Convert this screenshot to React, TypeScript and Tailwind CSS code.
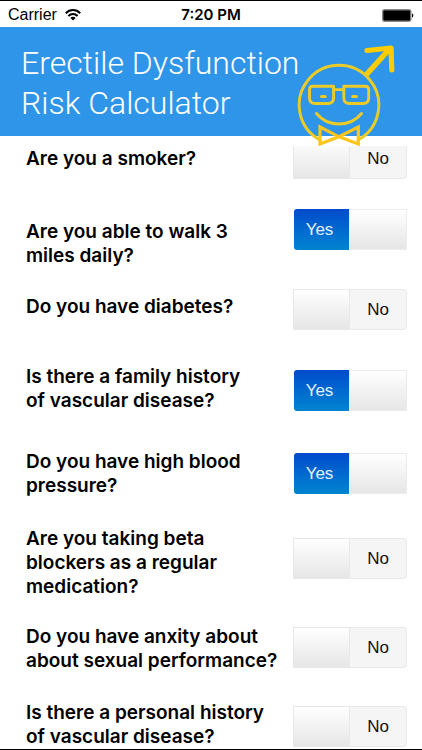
import { useState } from "react";

type Question = {
  id: string;
  text: string;
  yes: boolean;
  row: string;
  labelPad: string;
  switchPad: string;
};

const questions: Question[] = [
  { id: "smoker", text: "Are you a smoker?", yes: false, row: "h-[71px]", labelPad: "pt-2", switchPad: "pt-0" },
  { id: "walk", text: "Are you able to walk 3\nmiles daily?", yes: true, row: "h-20", labelPad: "pt-[10px]", switchPad: "pt-0" },
  { id: "diabetes", text: "Do you have diabetes?", yes: false, row: "h-[75px]", labelPad: "pt-[5px]", switchPad: "pt-0" },
  { id: "family", text: "Is there a family history\nof vascular disease?", yes: true, row: "h-[85px]", labelPad: "pt-0", switchPad: "pt-[6px]" },
  { id: "pressure", text: "Do you have high blood\npressure?", yes: true, row: "h-[77px]", labelPad: "pt-0", switchPad: "pt-1" },
  { id: "beta", text: "Are you taking beta\nblockers as a regular\nmedication?", yes: false, row: "h-[98px]", labelPad: "pt-0", switchPad: "pt-3" },
  { id: "anxiety", text: "Do you have anxity about\nabout sexual performance?", yes: false, row: "h-[76px]", labelPad: "pt-0", switchPad: "pt-[3px]" },
  { id: "personal", text: "Is there a personal history\nof vascular disease?", yes: false, row: "h-20", labelPad: "pt-0", switchPad: "pt-[6px]" },
];

function StatusBar() {
  return (
    <div className="grid h-[26px] shrink-0 grid-cols-3 items-center px-2 pt-0.5 text-base leading-6 text-black">
      <div className="flex items-center gap-2">
        <span>Carrier</span>
        <svg width="16" height="13" viewBox="0 0 16 13" fill="none" stroke="#000" strokeWidth="2" aria-hidden="true">
          <path d="M0.8 4.2 C4.8 0 11.2 0 15.2 4.2" />
          <path d="M3.4 7 C6 4.4 10 4.4 12.6 7" />
          <path d="M5.4 8.9 C6.9 7.5 9.1 7.5 10.6 8.9 L8 11.6 Z" fill="#000" stroke="none" />
        </svg>
      </div>
      <span className="text-center font-['Inter'] text-[15px] font-semibold">7:20 PM</span>
      <svg className="justify-self-end" width="32" height="13" viewBox="0 0 32 13" aria-hidden="true">
        <rect x="0.5" y="0.5" width="28.5" height="12" rx="1.5" fill="#fff" stroke="#888" />
        <rect x="1.2" y="1.2" width="27.2" height="10.6" rx="1" fill="#000" />
        <path d="M30 4.5 C31.8 5 31.8 8 30 8.5 Z" fill="#000" />
      </svg>
    </div>
  );
}

function Logo() {
  return (
    <svg
      className="absolute top-[13px] right-[22px]"
      width="105"
      height="110"
      viewBox="295 40 105 110"
      fill="none"
      stroke="#eccb27"
      strokeWidth="2.9"
      strokeLinecap="round"
      strokeLinejoin="round"
      aria-hidden="true"
    >
      <path d="M365.5 75.5 L390 48.5" stroke="#fc0" strokeWidth="5.5" strokeLinecap="butt" />
      <path d="M367 50.5 L391 48 L391.8 69.8" stroke="#fc0" strokeWidth="5.2" />
      <path d="M320 140 A39.8 39.8 0 1 1 358 140" />
      <path d="M312.5 86.3 H333.6 V98 Q333.6 103.5 328 103.5 H315 Q309.5 103.5 309.5 98 V90 Q309.5 86.3 312.5 86.3 Z" />
      <path d="M343.8 86.3 H365 Q368.7 86.3 368.7 90 V98 Q368.7 103.5 363 103.5 H349.4 Q343.8 103.5 343.8 98 Z" />
      <path d="M333.6 89.6 H343.8" />
      <path d="M321.6 96.5 H325.2 M352.7 96.5 H356.3" strokeWidth="3.2" />
      <path d="M316.5 113.5 Q325 124 339 124 Q353 124 361.5 113.5" />
      <path
        d="M320 127 L339 136.8 L358.3 127 V144 L339 136.8 L320 144 Z"
        stroke="#fbc51a"
        strokeWidth="3.2"
        strokeLinejoin="miter"
      />
    </svg>
  );
}

function Header() {
  return (
    <header className="relative z-10 shrink-0 bg-white pb-[10px]">
      <div className="bg-[#2e95e8] px-[21px] pt-4 pb-[13px]">
        <h1 className="font-['Roboto'] text-[32px] leading-10 font-light text-white">
          Erectile Dysfunction
          <br />
          Risk Calculator
        </h1>
      </div>
      <Logo />
    </header>
  );
}

function Toggle({ id, on, onChange }: { id: string; on: boolean; onChange: () => void }) {
  return (
    <div className="relative flex h-[41px] w-[114px] text-center text-[17px]">
      <input
        id={id}
        type="checkbox"
        checked={on}
        onChange={onChange}
        className="absolute inset-0 m-0 h-full w-full cursor-pointer opacity-0"
      />
      {on ? (
        <>
          <span className="ml-px w-[55px] rounded-l-[3px] bg-linear-to-b from-[#0349cc] to-[#0284d0] pr-1 leading-[41px] text-[#e4f1ff]">
            Yes
          </span>
          <span className="flex-1 border border-[#ececec] bg-linear-to-b from-white to-[#e6e6e6]" />
        </>
      ) : (
        <>
          <span className="w-[57px] border border-[#e8e8e8] bg-linear-to-b from-white to-[#e6e6e6]" />
          <span className="flex-1 rounded-r-[4px] border border-l-0 border-[#e9e9e9] bg-[#f5f5f5] leading-[39px] text-[#111]">
            No
          </span>
        </>
      )}
    </div>
  );
}

export default function App() {
  const [answers, setAnswers] = useState<Record<string, boolean>>(
    Object.fromEntries(questions.map((q) => [q.id, q.yes])),
  );

  return (
    <div className="flex h-screen flex-col overflow-hidden border-y border-black bg-white font-['Liberation_Sans',Arial,sans-serif]">
      <StatusBar />
      <Header />
      <main className="min-h-0 flex-1 overflow-hidden">
        <form className="-mt-2">
          {questions.map((q) => (
            <div key={q.id} className={`flex items-start justify-between pr-[15px] pl-[26px] ${q.row}`}>
              <label
                htmlFor={q.id}
                className={`mt-px font-['Inter',sans-serif] text-[19px] leading-6 font-semibold whitespace-pre-line text-black ${q.labelPad}`}
              >
                {q.text}
              </label>
              <div className={q.switchPad}>
                <Toggle
                  id={q.id}
                  on={answers[q.id]}
                  onChange={() => setAnswers({ ...answers, [q.id]: !answers[q.id] })}
                />
              </div>
            </div>
          ))}
        </form>
      </main>
    </div>
  );
}
